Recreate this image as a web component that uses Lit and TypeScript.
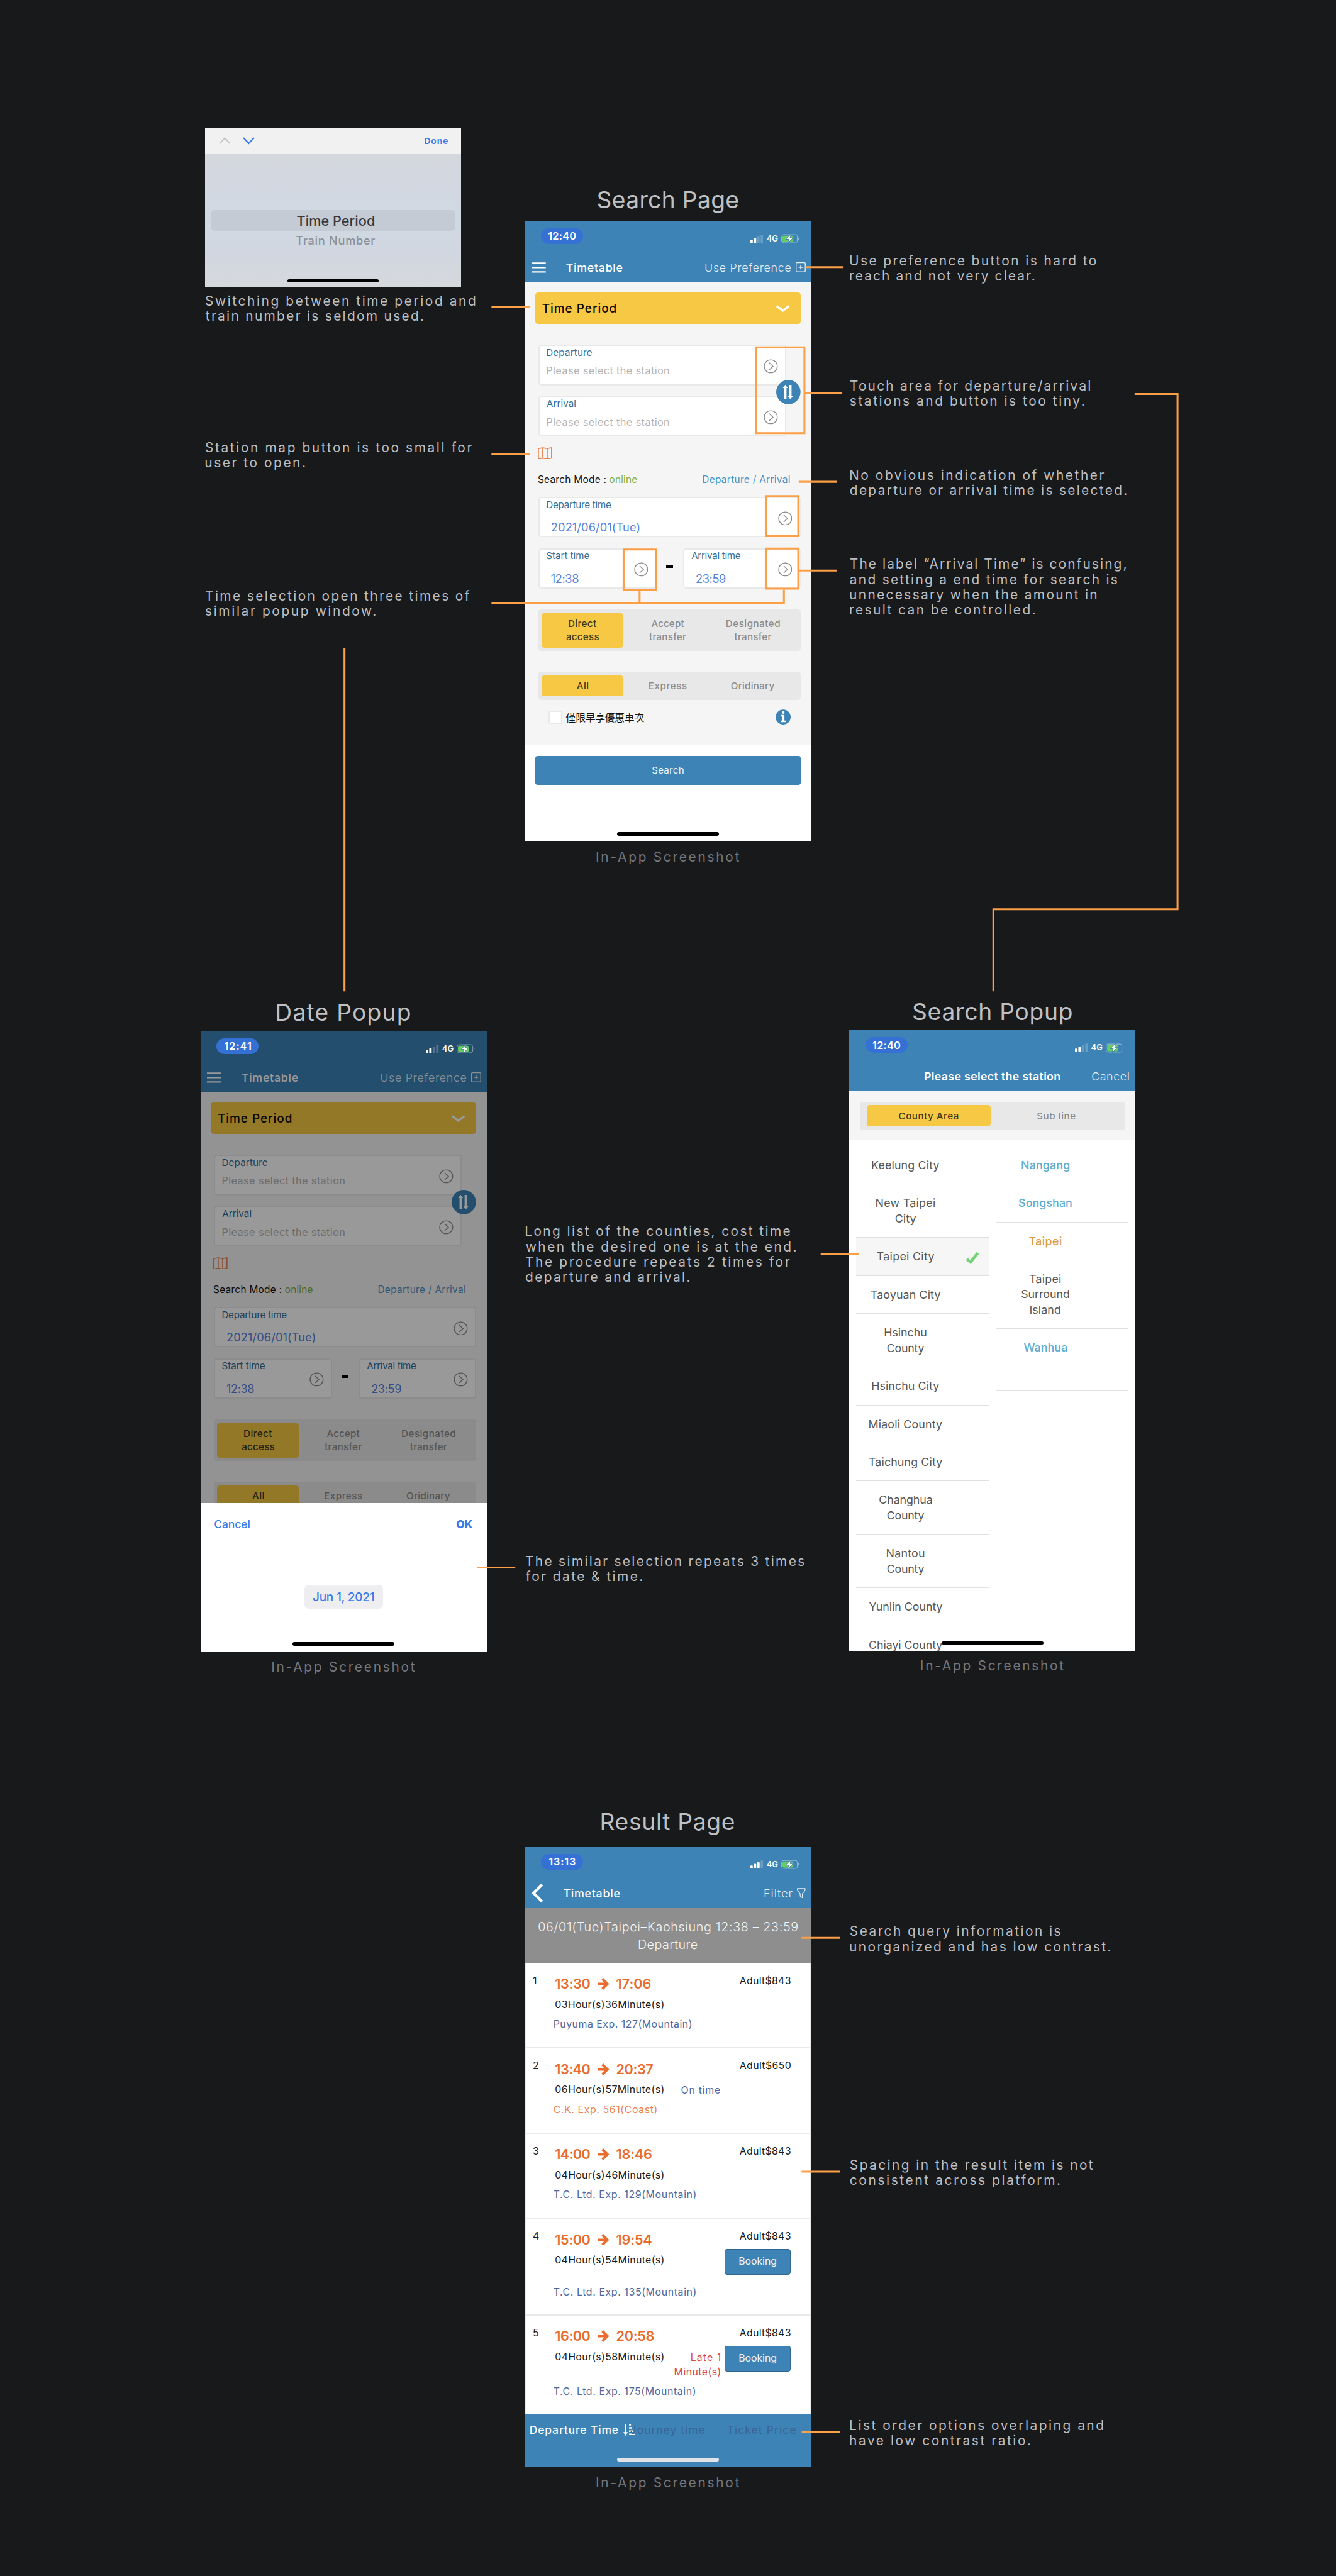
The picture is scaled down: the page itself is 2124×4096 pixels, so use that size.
import { LitElement, html, css, svg, nothing, TemplateResult } from "lit";
import { customElement, property } from "lit/decorators.js";
import { classMap } from "lit/directives/class-map.js";
import { styleMap } from "lit/directives/style-map.js";

const pen = document.createElement("canvas").getContext("2d")!;

/** One line of text, tracked so that its ink spans exactly `w` pixels. */
@customElement("fit-text")
class FitText extends LitElement {
  @property({ type: Number }) w = 0;

  static styles = css`
    :host {
      display: inline-block;
      white-space: nowrap;
      flex: none;
    }
    .ink {
      display: block;
    }
  `;

  updated() {
    const text = (this.textContent ?? "").trim();
    if (!this.w || text.length < 2) return;
    const cs = getComputedStyle(this);
    pen.font = `${cs.fontWeight} ${cs.fontSize} ${cs.fontFamily}`;
    const m = pen.measureText(text);
    const ink = m.actualBoundingBoxLeft + m.actualBoundingBoxRight;
    const track = (this.w - ink) / (text.length - 1);
    const box = this.renderRoot.querySelector<HTMLElement>(".ink")!;
    box.style.letterSpacing = `${track}px`;
    box.style.marginLeft = `${m.actualBoundingBoxLeft}px`;
    box.style.marginRight = `${m.actualBoundingBoxRight - m.width - track}px`;
  }

  render() {
    return html`<span class="ink"><slot></slot></span>`;
  }
}

const base = css`
  * {
    box-sizing: border-box;
  }
  svg {
    display: block;
    flex: none;
  }
  .screen {
    position: relative;
    display: flex;
    flex-direction: column;
    width: 600px;
    height: 1300px;
    background: #fff;
    overflow: hidden;
  }
  .header {
    height: 127.5px;
    flex: none;
    background: #3d83b6;
    color: #fff;
  }
  .nav {
    display: flex;
    align-items: center;
    height: 61.5px;
    font-size: 23.5px;
    padding: 0 11.5px 0 14px;
  }
  .title {
    font-weight: 500;
  }
  .light {
    font-weight: 300;
    margin-left: auto;
    color: #e6eff6;
  }
  .segment {
    display: flex;
    border-radius: 6px;
    background: #e8e8e8;
    font-size: 20px;
    font-weight: 500;
    line-height: 27.7px;
    color: #8c8c8c;
  }
  .option {
    display: flex;
    flex-direction: column;
    align-items: center;
    justify-content: center;
    border-radius: 6px;
  }
  .option.on {
    background: #f6c844;
    color: #3f3718;
  }
  .home {
    position: absolute;
    left: 193px;
    bottom: 12px;
    width: 214px;
    height: 7.5px;
    border-radius: 4px;
    background: #000;
  }
`;

@customElement("status-bar")
class StatusBar extends LitElement {
  @property() time = "12:40";
  @property({ type: Number }) w = 59;
  @property({ type: Number }) bars = 2;

  static styles = [
    base,
    css`
      :host {
        display: block;
      }
      .status {
        position: relative;
        z-index: 2;
        height: 66px;
        display: flex;
        justify-content: space-between;
        align-items: flex-start;
        padding: 14px 25px 0 34px;
        color: #fff;
      }
      .pill {
        display: flex;
        align-items: center;
        justify-content: center;
        width: 88px;
        height: 33px;
        border-radius: 17px;
        background: #3571d5;
        font-size: 21.5px;
        font-weight: 600;
      }
      .radio {
        display: flex;
        align-items: center;
        height: 44.6px;
        gap: 7px;
        font-size: 17px;
        font-weight: 600;
      }
    `,
  ];

  render() {
    return html`<div class="status">
      <div class="pill"><fit-text w=${this.w}>${this.time}</fit-text></div>
      <div class="radio">
        <svg width="27" height="18" viewBox="0 0 27 18" fill="#fff">
          ${[0, 1, 2, 3].map(
            (i) =>
              svg`<rect x=${i * 7.2} y=${11 - i * 3.6} width="5" height=${7 + i * 3.6} rx="1.4" opacity=${
                i < this.bars ? 1 : 0.22
              } />`
          )}
        </svg>
        <fit-text w="23.5">4G</fit-text>
        <svg width="38" height="22" viewBox="0 0 38 22">
          <rect x=".8" y="2.8" width="33" height="17" rx="5" fill="none" stroke="#fff" stroke-opacity=".42" stroke-width="1.4" />
          <path d="M35.6 8.6c2.4.6 2.4 4.6 0 5.2z" fill="#fff" fill-opacity=".45" />
          <rect x="2.8" y="4.8" width="22.5" height="13" rx="3" fill="#66cf63" />
          <path
            d="M20.2 1.5 9.5 12.5h6.2l-2.2 8.3L25 9.6h-6.4z"
            fill="#fff"
            stroke="#3d7f9e"
            stroke-width="1.3"
            stroke-linejoin="round"
          />
        </svg>
      </div>
    </div>`;
  }
}

const go = svg`<svg class="go" width="30" height="30" viewBox="0 0 30 30" fill="none" stroke="#8b8b8b" stroke-width="1.8">
  <circle cx="15" cy="15" r="13.6" /><path d="M11.8 7.6 19.8 15l-8 7.4" />
</svg>`;

const two = (a: [string, number], b: [string, number], on = false) =>
  html`<div class=${classMap({ option: true, on })}>
    <fit-text w=${a[1]}>${a[0]}</fit-text><fit-text w=${b[1]}>${b[0]}</fit-text>
  </div>`;
const one = (a: string, w: number, on = false) =>
  html`<div class=${classMap({ option: true, on })}><fit-text w=${w}>${a}</fit-text></div>`;

@customElement("search-screen")
class SearchScreen extends LitElement {
  @property() time = "12:40";
  @property({ type: Number }) timeWidth = 59;
  @property({ type: Boolean }) sheet = false;

  static styles = [
    base,
    css`
      .title {
        margin-left: 43px;
      }
      .plus {
        margin-left: 10px;
      }
      .form {
        height: 971px;
        flex: none;
        padding: 22px 22px 0;
        background: #f5f5f5;
      }
      .inner {
        margin-left: 6px;
      }
      .select {
        display: flex;
        align-items: center;
        justify-content: space-between;
        height: 65px;
        padding: 2px 23px 0 15px;
        border-radius: 6px;
        background: #f6c844;
        font-size: 25px;
        font-weight: 500;
        color: #0c0a04;
      }
      .stations {
        position: relative;
        display: flex;
        flex-direction: column;
        gap: 22.3px;
        width: 520px;
        margin-top: 44.5px;
      }
      .swap {
        position: absolute;
        left: 499px;
        top: 73px;
      }
      .card {
        display: flex;
        justify-content: space-between;
        align-items: center;
        height: 84.6px;
        padding: 0 15px 0 15px;
        border: 2.7px solid #e9e9e9;
        border-radius: 6px;
        background: #fff;
      }
      .text {
        display: flex;
        flex-direction: column;
        align-self: flex-start;
        align-items: flex-start;
        padding-top: 2px;
      }
      .go {
        margin-top: 5px;
      }
      .label {
        font-size: 20px;
        line-height: 24px;
        color: #366f98;
      }
      .hint {
        margin-top: 11px;
        font-size: 21.5px;
        line-height: 30px;
        color: #b3b3b3;
      }
      .value {
        margin: 20px 0 0 10px;
        font-size: 24px;
        line-height: 30px;
        color: #5583dd;
      }
      .map {
        margin: 22.5px 0 0 -1px;
      }
      .mode {
        display: flex;
        align-items: center;
        height: 30px;
        margin: 27px 0 21.6px;
        padding-right: 22.5px;
        font-size: 20.3px;
        color: #111;
      }
      .online {
        margin-left: 8px;
        color: #83ad45;
      }
      .which {
        margin-left: auto;
        color: #4a91c3;
      }
      .range {
        display: grid;
        grid-template-columns: 248px 55.4px 1fr;
        margin-top: 23px;
      }
      .dash {
        width: 14px;
        height: 6.5px;
        margin: 34.5px auto 0;
        background: #000;
      }
      .segment {
        gap: 7.7px;
        padding: 7.3px;
      }
      .option {
        width: 171px;
      }
      .s1 {
        height: 87.3px;
        margin-top: 44px;
      }
      .s2 {
        height: 59px;
        margin-top: 43.3px;
      }
      .early {
        display: flex;
        align-items: center;
        height: 32px;
        margin-top: 20px;
        padding: 0 21px 0 21.4px;
        font-family: "Noto Sans CJK TC", sans-serif;
        font-size: 20.8px;
        color: #111;
      }
      .box {
        width: 28.6px;
        height: 28px;
        margin-right: 8px;
        border: 2.7px solid #e9e9e9;
        border-radius: 4px;
        background: #fff;
      }
      .info {
        margin-left: auto;
      }
      .submit {
        display: flex;
        align-items: center;
        justify-content: center;
        height: 60.7px;
        margin: 22px 22px 0;
        border-radius: 5px;
        background: #3d83b6;
        color: #f1f6fa;
        font-size: 20px;
      }
      .dim {
        position: absolute;
        inset: 0;
        z-index: 1;
        background: rgba(0, 0, 0, 0.4);
      }
      .sheet {
        position: absolute;
        inset: 989px 0 0;
        z-index: 3;
        background: #fff;
        color: #3a7bec;
        font-size: 23px;
        font-weight: 500;
      }
      .actions {
        display: flex;
        justify-content: space-between;
        padding: 30.5px 29.5px 0 29.7px;
        line-height: 30px;
      }
      .ok {
        font-weight: 800;
      }
      .date {
        display: flex;
        align-items: center;
        justify-content: center;
        width: 165px;
        height: 50px;
        margin: 111px auto 0;
        border-radius: 9px;
        background: #eeeef0;
        font-size: 25px;
      }
    `,
  ];

  card(label: string, w: number, value: string, vw: number, kind: "hint" | "value") {
    return html`<div class="card">
      <div class="text">
        <fit-text class="label" w=${w}>${label}</fit-text>
        <fit-text class=${kind} w=${vw}>${value}</fit-text>
      </div>
      ${go}
    </div>`;
  }

  render() {
    return html`<div class="screen">
      <div class="header">
        <status-bar time=${this.time} w=${this.timeWidth}></status-bar>
        <div class="nav">
          <svg width="30" height="22" viewBox="0 0 30 22" stroke="#fff" stroke-width="2.8">
            <path d="M0 1.8h30M0 11h30M0 20.2h30" />
          </svg>
          <fit-text class="title" w="117.5">Timetable</fit-text>
          <fit-text class="light" w="179">Use Preference</fit-text>
          <svg class="plus" width="21" height="21" viewBox="0 0 21 21" fill="none" stroke="#e6eff6" stroke-width="1.8">
            <rect x=".9" y=".9" width="19.2" height="19.2" rx="1.5" />
            <path d="M10.5 6.2v8.6M6.2 10.5h8.6" />
          </svg>
        </div>
      </div>
      <div class="form">
        <div class="select">
          <fit-text w="154">Time Period</fit-text>
          <svg width="28" height="16" viewBox="0 0 28 16" fill="none" stroke="#fff" stroke-width="4.6">
            <path d="M1.2 2.2 14 11.8 26.8 2.2" />
          </svg>
        </div>
        <div class="inner">
          <div class="stations">
            ${this.card("Departure", 95, "Please select the station", 257.5, "hint")}
            ${this.card("Arrival", 61, "Please select the station", 257.5, "hint")}
            <svg class="swap" width="51" height="51" viewBox="0 0 51 51">
              <circle cx="25.5" cy="25.5" r="25.5" fill="#3d83b6" />
              <path
                d="M18.9 10.3 24.2 17h-2.6v24h-5V17h-2.8zM27.2 10.5h5v23.8H35L29.8 41l-5.3-6.7h2.7z"
                fill="#fff"
              />
            </svg>
          </div>
          <svg class="map" width="30" height="26" viewBox="0 0 30 26" fill="none" stroke="#e87a45" stroke-width="2">
            <path d="M1.2 3 10.4 1.2 19.8 3l9-1.8V23l-9 1.8-9.4-1.8-9.2 1.8zM10.4 1.2V23M19.8 3v21.8" />
          </svg>
          <div class="mode">
            <fit-text w="142">Search Mode :</fit-text>
            <fit-text class="online" w="57">online</fit-text>
            <fit-text class="which" w="183">Departure / Arrival</fit-text>
          </div>
          ${this.card("Departure time", 135, "2021/06/01(Tue)", 185, "value")}
          <div class="range">
            ${this.card("Start time", 89.5, "12:38", 57, "value")}
            <div class="dash"></div>
            ${this.card("Arrival time", 103, "23:59", 62, "value")}
          </div>
          <div class="segment s1">
            ${two(["Direct", 59], ["access", 68.6], true)} ${two(["Accept", 69], ["transfer", 78])}
            ${two(["Designated", 112], ["transfer", 78])}
          </div>
          <div class="segment s2">${one("All", 24.5, true)} ${one("Express", 79)} ${one("Oridinary", 91)}</div>
          ${this.sheet
            ? nothing
            : html`<div class="early">
                <div class="box"></div>
                <fit-text w="164.5">僅限早享優惠車次</fit-text>
                <svg class="info" width="32" height="32" viewBox="0 0 32 32">
                  <circle cx="16" cy="16" r="15.7" fill="#3d83b6" />
                  <path d="M13.4 3.8h5.2v5h-5.2zM10.8 11.6h7.8v11.8h2.4v3.4H10.8v-3.4h2.6V15h-2.6z" fill="#fff" />
                </svg>
              </div>`}
        </div>
      </div>
      ${this.sheet
        ? html`<div class="dim"></div>
            <div class="sheet">
              <div class="actions">
                <fit-text w="74">Cancel</fit-text><fit-text class="ok" w="34.5">OK</fit-text>
              </div>
              <div class="date"><fit-text w="128">Jun 1, 2021</fit-text></div>
              <div class="home"></div>
            </div>`
        : html`<div class="submit"><fit-text w="66">Search</fit-text></div>
            <div class="home"></div>`}
    </div>`;
  }
}

type Line = [string, number];
interface Place {
  lines: Line[];
  tone?: string;
  picked?: boolean;
}

const counties: Place[] = [
  { lines: [["Keelung City", 141]] },
  { lines: [["New Taipei", 123.6], ["City", 43.4]] },
  { lines: [["Taipei City", 119.7]], picked: true },
  { lines: [["Taoyuan City", 146]] },
  { lines: [["Hsinchu", 87.6], ["County", 77.6]] },
  { lines: [["Hsinchu City", 140.5]] },
  { lines: [["Miaoli County", 153]] },
  { lines: [["Taichung City", 153.5]] },
  { lines: [["Changhua", 110.6], ["County", 77.6]] },
  { lines: [["Nantou", 79], ["County", 77.6]] },
  { lines: [["Yunlin County", 154.4]] },
  { lines: [["Chiayi County", 153.5]] },
];
const stations: Place[] = [
  { lines: [["Nangang", 100.6]], tone: "blue" },
  { lines: [["Songshan", 111]], tone: "blue" },
  { lines: [["Taipei", 67.6]], tone: "amber" },
  { lines: [["Taipei", 66], ["Surround", 100], ["Island", 63]] },
  { lines: [["Wanhua", 90.6]], tone: "blue last" },
];

@customElement("station-screen")
class StationScreen extends LitElement {
  static styles = [
    base,
    css`
      .nav {
        padding-left: 157.7px;
        padding-right: 14px;
      }
      .title {
        font-weight: 600;
      }
      .tabs {
        flex: none;
        height: 103.2px;
        padding: 22px;
        background: #f5f5f5;
      }
      .segment {
        height: 59px;
        padding: 7px 14.4px;
        gap: 8px;
      }
      .option {
        width: 260.4px;
      }
      .lists {
        display: flex;
        gap: 14.4px;
        padding: 12.6px 14.6px 0;
        font-size: 23.5px;
        line-height: 32px;
        color: #565656;
      }
      .list {
        flex: 1;
      }
      .row {
        display: flex;
        align-items: center;
        padding-top: 1px;
        border-bottom: 1.8px solid #e0e0e0;
      }
      .n1 {
        height: 79.7px;
      }
      .n2 {
        height: 111.9px;
      }
      .n3 {
        height: 143.4px;
      }
      .name {
        display: flex;
        flex-direction: column;
        align-items: center;
        width: 207.4px;
      }
      .picked {
        background: #f6f6f6;
      }
      .tick {
        margin: 4px 0 0 22px;
      }
      .blue {
        color: #5badd1;
        font-weight: 500;
      }
      .amber {
        color: #e19b40;
        font-weight: 500;
      }
      .last {
        height: 129.4px;
        padding-bottom: 49.7px;
      }
    `,
  ];

  list(places: Place[]) {
    return html`<div class="list">
      ${places.map(
        (p) => html`<div class="row n${p.lines.length} ${p.tone ?? ""} ${p.picked ? "picked" : ""}">
          <div class="name">${p.lines.map(([t, w]) => html`<fit-text w=${w}>${t}</fit-text>`)}</div>
          ${p.picked
            ? svg`<svg class="tick" width="29" height="27" viewBox="0 0 29 27" fill="none" stroke="#75d377" stroke-width="6">
                <path d="M2.6 15.8 10.6 22.4 25.8 3" /></svg>`
            : nothing}
        </div>`
      )}
    </div>`;
  }

  render() {
    return html`<div class="screen">
      <div class="header">
        <status-bar time="12:40" w="59"></status-bar>
        <div class="nav">
          <fit-text class="title" w="284">Please select the station</fit-text>
          <fit-text class="light" w="77.6">Cancel</fit-text>
        </div>
      </div>
      <div class="tabs">
        <div class="segment">${one("County Area", 124, true)} ${one("Sub line", 80)}</div>
      </div>
      <div class="lists">${this.list(counties)} ${this.list(stations)}</div>
      <div class="home"></div>
    </div>`;
  }
}

interface Train {
  from: Line;
  to: Line;
  duration: string;
  name: Line;
  fare: string;
  coast?: boolean;
  onTime?: boolean;
  late?: boolean;
  booking?: boolean;
}
const trains: Train[] = [
  { from: ["13:30", 72.7], to: ["17:06", 71.5], duration: "03Hour(s)36Minute(s)", name: ["Puyuma Exp. 127(Mountain)", 289], fare: "Adult$843" },
  { from: ["13:40", 72.7], to: ["20:37", 76.7], duration: "06Hour(s)57Minute(s)", name: ["C.K. Exp. 561(Coast)", 216], fare: "Adult$650", coast: true, onTime: true },
  { from: ["14:00", 72.7], to: ["18:46", 73.5], duration: "04Hour(s)46Minute(s)", name: ["T.C. Ltd. Exp. 129(Mountain)", 298], fare: "Adult$843" },
  { from: ["15:00", 72.7], to: ["19:54", 73.5], duration: "04Hour(s)54Minute(s)", name: ["T.C. Ltd. Exp. 135(Mountain)", 298], fare: "Adult$843", booking: true },
  { from: ["16:00", 72.7], to: ["20:58", 78], duration: "04Hour(s)58Minute(s)", name: ["T.C. Ltd. Exp. 175(Mountain)", 297], fare: "Adult$843", booking: true, late: true },
];

@customElement("result-screen")
class ResultScreen extends LitElement {
  static styles = [
    base,
    css`
      .title {
        margin-left: 43px;
      }
      .funnel {
        margin-left: 10px;
      }
      .query {
        display: flex;
        flex-direction: column;
        flex: none;
        align-items: center;
        height: 116px;
        padding-top: 23px;
        background: #8e8e8e;
        color: #f4f4f4;
        font-size: 26px;
        font-weight: 300;
        line-height: 36px;
      }
      .train {
        display: flex;
        flex: none;
        border: 2.7px solid #e9e9e9;
        border-top-width: 0;
        height: 178.6px;
        padding-top: 1px;
        font-size: 21px;
        line-height: 30px;
        color: #1b1b1b;
      }
      .train.booking {
        height: 202.6px;
      }
      .train.late {
        height: 206px;
        border-bottom: 0;
      }
      .index {
        width: 43px;
        padding: 21.5px 0 0 14px;
      }
      .main {
        flex: none;
        width: 364px;
      }
      .times {
        display: flex;
        align-items: center;
        height: 36px;
        margin: 24.3px 0 11.3px 18.5px;
        font-size: 28.5px;
        font-weight: 600;
        color: #e96b2d;
      }
      .arrow {
        margin: 0 15.5px;
      }
      .mid {
        display: flex;
        justify-content: space-between;
        height: 30px;
        margin-left: 18.5px;
      }
      .booking .mid {
        height: 55.5px;
      }
      .late .mid {
        height: 61.8px;
      }
      .state {
        display: flex;
        flex-direction: column;
        align-items: flex-end;
        line-height: 30.6px;
        color: #4c679e;
      }
      .late .state {
        color: #df463c;
      }
      .name {
        display: block;
        margin: 11.2px 0 0 15px;
        color: #4c679e;
      }
      .coast .name {
        color: #ee8350;
      }
      .side {
        display: flex;
        flex-direction: column;
        align-items: flex-end;
        flex: 1;
        padding: 21.5px 40.5px 0 0;
      }
      .book {
        display: flex;
        align-items: center;
        justify-content: center;
        width: 137.6px;
        height: 54px;
        margin-top: 11px;
        border: 1.4px solid #2d6690;
        border-radius: 5px;
        background: #3d83b6;
        color: #f1f6fa;
      }
      .sort {
        position: relative;
        flex: 1;
        display: flex;
        align-items: flex-start;
        padding: 19px 32px 0 10.6px;
        background: #3d83b6;
        font-size: 23px;
        line-height: 30px;
        color: #3a6493;
      }
      .active {
        color: #fff;
        font-weight: 500;
      }
      .order {
        margin: 2px 0 0 10.5px;
      }
      .journey {
        margin-left: -8.5px;
      }
      .price {
        margin-left: auto;
      }
      .sort .home {
        background: #e2e3e7;
      }
    `,
  ];

  train(t: Train, i: number) {
    return html`<div
      class=${classMap({ train: true, booking: !!t.booking, late: !!t.late, coast: !!t.coast })}
    >
      <div class="index">${i + 1}</div>
      <div class="main">
        <div class="times">
          <fit-text w=${t.from[1]}>${t.from[0]}</fit-text>
          <svg class="arrow" width="24.5" height="25" viewBox="0 0 24.5 25" fill="none" stroke="#e96b2d" stroke-width="5.4">
            <path d="M0 12.5h20M10 1.9 20.6 12.5 10 23.1" />
          </svg>
          <fit-text w=${t.to[1]}>${t.to[0]}</fit-text>
        </div>
        <div class="mid">
          <fit-text w="227">${t.duration}</fit-text>
          <div class="state">
            ${t.onTime ? html`<fit-text w="81.6">On time</fit-text>` : nothing}
            ${t.late
              ? html`<fit-text w="61.6">Late 1</fit-text><fit-text w="96">Minute(s)</fit-text>`
              : nothing}
          </div>
        </div>
        <div class="name"><fit-text w=${t.name[1]}>${t.name[0]}</fit-text></div>
      </div>
      <div class="side">
        <fit-text w="107">${t.fare}</fit-text>
        ${t.booking ? html`<div class="book"><fit-text w="78.5">Booking</fit-text></div>` : nothing}
      </div>
    </div>`;
  }

  render() {
    return html`<div class="screen">
      <div class="header">
        <status-bar time="13:13" w="56" bars="3"></status-bar>
        <div class="nav">
          <svg width="24.5" height="40" viewBox="0 0 24.5 40" fill="none" stroke="#fff" stroke-width="5.6">
            <path d="M22.4 2 4.4 20l18 18" />
          </svg>
          <fit-text class="title" w="117.5">Timetable</fit-text>
          <fit-text class="light" w="58">Filter</fit-text>
          <svg class="funnel" width="18" height="22" viewBox="0 0 18 22" fill="none" stroke="#e6eff6" stroke-width="1.6" stroke-linejoin="round">
            <path d="M.9 1h16.2v4L11.4 12v8.4l-4.6-3.2V12L.9 5zM.9 4.6h16.2" />
          </svg>
        </div>
      </div>
      <div class="query">
        <fit-text w="543">06/01(Tue)Taipei–Kaohsiung 12:38 – 23:59</fit-text>
        <fit-text w="122.5">Departure</fit-text>
      </div>
      ${trains.map((t, i) => this.train(t, i))}
      <div class="sort">
        <fit-text class="active" w="185">Departure Time</fit-text>
        <svg class="order" width="24" height="25" viewBox="0 0 24 25" fill="#fff">
          <path d="M2.8 0h3.6v17.6h3L4.6 25 0 17.6h2.8zM12 .4h4v3.2h-4zM12 7h6.4v3.2H12zM12 13.8h9v3.2h-9zM12 20.6h12v3.2H12z" />
        </svg>
        <fit-text class="journey" w="155.5">Journey time</fit-text>
        <fit-text class="price" w="143.7">Ticket Price</fit-text>
        <div class="home"></div>
      </div>
    </div>`;
  }
}

@customElement("wheel-picker")
class WheelPicker extends LitElement {
  static styles = [
    base,
    css`
      .picker {
        position: relative;
        display: flex;
        flex-direction: column;
        width: 536px;
        height: 334px;
        background: linear-gradient(#d6d7da, #d3d7e0 30%, #d0d9e3 55%, #d1d7e0 78%, #d6d8dc);
      }
      .bar {
        display: flex;
        align-items: center;
        height: 54.4px;
        padding: 0 26.5px 0 29px;
        background: #f1f1f1;
        font-size: 18px;
        font-weight: 700;
        color: #3a7bec;
      }
      .down {
        margin-left: 25px;
      }
      .done {
        margin-left: auto;
      }
      .current,
      .next {
        display: flex;
        align-items: center;
        justify-content: center;
        margin: 117.6px 12px 0;
        height: 44.4px;
        padding-left: 11px;
        border-radius: 8px;
        background: #c4cbd5;
        font-size: 28.5px;
        font-weight: 500;
        color: #36383c;
      }
      .next {
        height: 38px;
        margin-top: 0;
        background: none;
        font-size: 24px;
        color: #8b9099;
      }
      .home {
        left: 172.5px;
        width: 191px;
        bottom: 10px;
        height: 7px;
      }
    `,
  ];

  render() {
    return html`<div class="picker">
      <div class="bar">
        <svg width="25" height="15" viewBox="0 0 25 15" fill="none" stroke="#c6c6c6" stroke-width="2.6">
          <path d="M1.4 13.6 12.5 2l11.1 11.6" />
        </svg>
        <svg class="down" width="25" height="15" viewBox="0 0 25 15" fill="none" stroke="#3a7bec" stroke-width="3">
          <path d="M1.4 1.4 12.5 13 23.6 1.4" />
        </svg>
        <fit-text class="done" w="49.4">Done</fit-text>
      </div>
      <div class="current"><fit-text w="162">Time Period</fit-text></div>
      <div class="next"><fit-text w="165">Train Number</fit-text></div>
      <div class="home"></div>
    </div>`;
  }
}

interface Note {
  x: number;
  baseline: number;
  lines: Line[];
}
const notes: Note[] = [
  { x: 430, baseline: 640, lines: [["Switching between time period and", 567], ["train number is seldom used.", 458]] },
  { x: 430, baseline: 948, lines: [["Station map button is too small for", 560], ["user to open.", 210]] },
  { x: 430, baseline: 1259, lines: [["Time selection open three times of", 555], ["similar popup window.", 358]] },
  { x: 1781, baseline: 556, lines: [["Use preference button is hard to", 518], ["reach and not very clear.", 388]] },
  { x: 1781, baseline: 818, lines: [["Touch area for departure/arrival", 505], ["stations and button is too tiny.", 492]] },
  { x: 1781, baseline: 1006, lines: [["No obvious indication of whether", 534], ["departure or arrival time is selected.", 581]] },
  {
    x: 1781,
    baseline: 1192,
    lines: [
      ["The label “Arrival Time” is confusing,", 580],
      ["and setting a end time for search is", 562],
      ["unnecessary when the amount in", 519],
      ["result can be controlled.", 389],
    ],
  },
  {
    x: 1101,
    baseline: 2591,
    lines: [
      ["Long list of the counties, cost time", 556],
      ["when the desired one is at the end.", 568],
      ["The procedure repeats 2 times for", 555],
      ["departure and arrival.", 345],
    ],
  },
  { x: 1101, baseline: 3282, lines: [["The similar selection repeats 3 times", 586], ["for date & time.", 246]] },
  { x: 1781, baseline: 4058, lines: [["Search query information is", 443], ["unorganized and has low contrast.", 547]] },
  { x: 1781, baseline: 4548, lines: [["Spacing in the result item is not", 511], ["consistent across platform.", 441]] },
  { x: 1781, baseline: 5094, lines: [["List order options overlaping and", 532], ["have low contrast ratio.", 379]] },
];

const wires = [
  "M1030 644H1110",
  "M1030 952H1110",
  "M1030 1264H1643V1236M1340.5 1238V1264",
  "M1688 560H1768",
  "M1584 728H1686V908H1584ZM1688 824H1764",
  "M1674 1010H1754",
  "M1605 1040H1673V1124H1605Z",
  "M1605 1150H1673V1234H1605ZM1675 1196H1754",
  "M1307 1152H1375V1236H1307Z",
  "M2378 826H2468V1906H2082V2078",
  "M722 1358V2078",
  "M1000 3286H1080",
  "M1720 2628H1800",
  "M1680 4062H1760",
  "M1680 4552H1760",
  "M1680 5098H1760",
];

@customElement("app-root")
class AppRoot extends LitElement {
  static styles = [
    base,
    css`
      :host {
        display: block;
        width: 2124px;
        height: 4096px;
        overflow: hidden;
        background: #18191b;
        font-family: Inter, "Liberation Sans", sans-serif;
      }
      .board {
        position: relative;
        width: 2800px;
        height: 5400px;
        zoom: 0.75855;
      }
      .figure,
      .note,
      .wheel,
      .wires {
        position: absolute;
      }
      .wheel {
        left: 430px;
        top: 268px;
      }
      .wires {
        left: 0;
        top: 0;
        z-index: 5;
      }
      .figure {
        display: flex;
        flex-direction: column;
        align-items: center;
        width: 600px;
      }
      .heading {
        font-size: 49px;
        line-height: 60px;
        color: #bfc0c3;
      }
      .caption {
        margin-top: 14px;
        font-size: 27.5px;
        line-height: 36px;
        color: #75767c;
      }
      .note {
        display: flex;
        flex-direction: column;
        align-items: flex-start;
        font-size: 27.5px;
        line-height: 32px;
        color: #bcbdc0;
      }
    `,
  ];

  figure(title: string, w: number, x: number, y: number, rise: number, screen: TemplateResult) {
    const gap = rise - 12.5;
    return html`<div class="figure" style=${styleMap({ left: `${x}px`, top: `${y - 60 - gap}px` })}>
      <fit-text class="heading" w=${w} style=${styleMap({ marginBottom: `${gap}px` })}>${title}</fit-text>
      ${screen}
      <fit-text class="caption" w="299">In-App Screenshot</fit-text>
    </div>`;
  }

  render() {
    return html`<div class="board">
      <wheel-picker class="wheel"></wheel-picker>
      ${this.figure("Search Page", 295, 1100, 464, 28, html`<search-screen></search-screen>`)}
      ${this.figure(
        "Date Popup",
        279,
        420,
        2162,
        23,
        html`<search-screen time="12:41" .timeWidth=${56} sheet></search-screen>`
      )}
      ${this.figure("Search Popup", 333, 1780, 2160, 22, html`<station-screen></station-screen>`)}
      ${this.figure("Result Page", 278, 1100, 3872, 36, html`<result-screen></result-screen>`)}
      ${notes.map(
        (n) => html`<div class="note" style=${styleMap({ left: `${n.x + 0.8}px`, top: `${n.baseline - 25}px` })}>
          ${n.lines.map(([t, w]) => html`<fit-text w=${w - 2}>${t}</fit-text>`)}
        </div>`
      )}
      <svg class="wires" width="2800" height="5400" viewBox="0 0 2800 5400" fill="none" stroke="#fd9f47" stroke-width="4">
        ${wires.map((d) => svg`<path d=${d} />`)}
      </svg>
    </div>`;
  }
}
